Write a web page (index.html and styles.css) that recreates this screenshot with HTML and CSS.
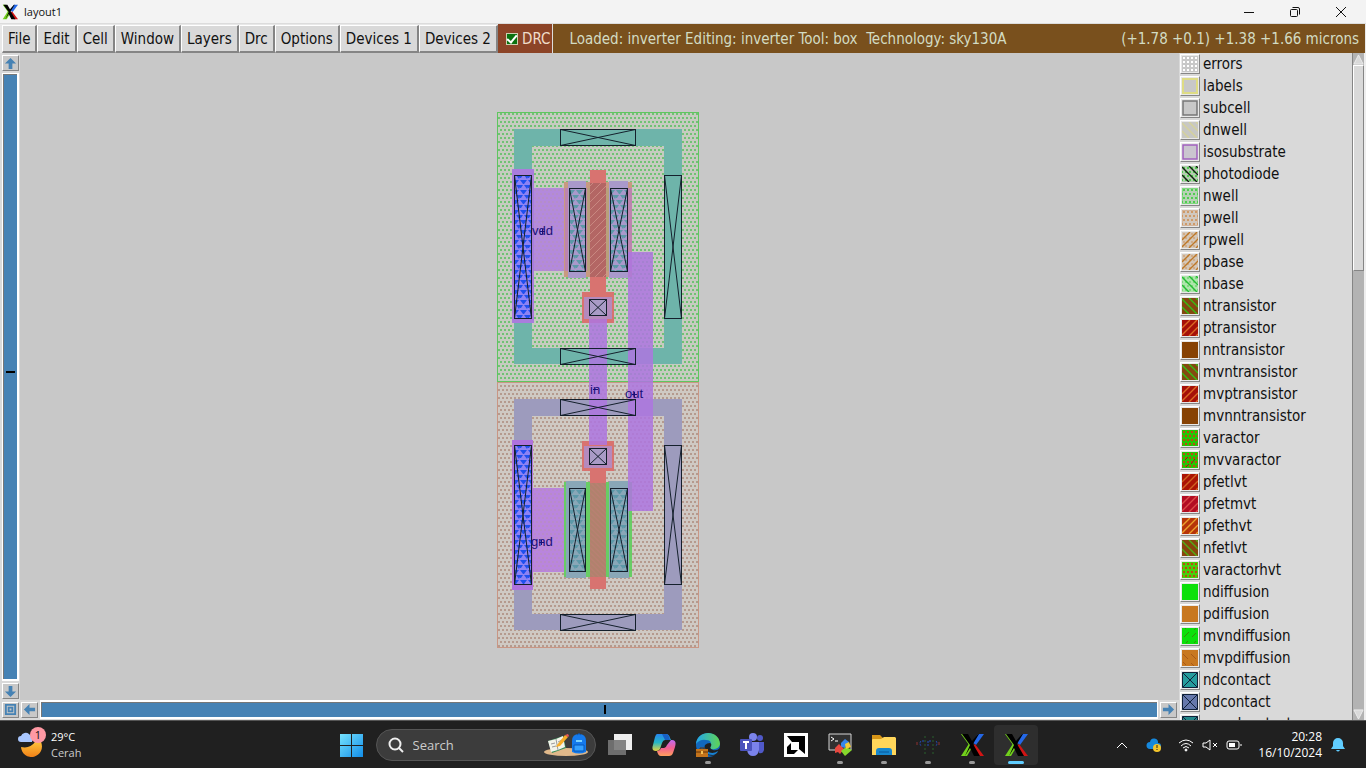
FILE: index.html
```
<!DOCTYPE html>
<html lang="en">
<head>
<meta charset="utf-8">
<title>layout1</title>
<link rel="stylesheet" href="styles.css">
</head>
<body>
<svg class="defs" aria-hidden="true">
  <defs>
    <pattern id="dots-green" width="4" height="8" patternUnits="userSpaceOnUse"><path d="M0 1h2v2H0zM2 5h2v2H2z" fill="#70c274"/></pattern>
    <pattern id="dots-brown" width="4" height="8" patternUnits="userSpaceOnUse"><path d="M0 1h2v2H0zM2 5h2v2H2z" fill="#b59a8e"/></pattern>
    <pattern id="tri-blue" width="8" height="10" patternUnits="userSpaceOnUse"><path d="M0 0h7L4 4H3zM4 5h4v2L7 9zM0 5h3L1 8 0 8z" fill="#1f50ee"/></pattern>
    <pattern id="tri-teal" width="8" height="10" patternUnits="userSpaceOnUse"><path d="M0 0h7L4 4H3zM4 5h4v2L7 9zM0 5h3L1 8 0 8z" fill="#5c98a8"/></pattern>
    <pattern id="hatch-up" width="8" height="8" patternUnits="userSpaceOnUse"><path d="M-1 9L9-1M-1 1L1-1M7 9L9 7" stroke="#d59a90"/></pattern>
    <pattern id="hatch-down" width="5" height="5" patternUnits="userSpaceOnUse"><path d="M-1-1L6 6M-1 4L1 6M4-1L6 1" stroke="#a98468" stroke-width="2"/></pattern>
    <pattern id="s-white" width="4" height="4" patternUnits="userSpaceOnUse"><path d="M1 1h2v2H1z" fill="#fff"/></pattern>
    <pattern id="s-green" width="4" height="8" patternUnits="userSpaceOnUse"><path d="M1 1h2v2H1zM3 5h1v2H3zM0 5h1v2H0z" fill="#50cd50"/></pattern>
    <pattern id="s-brown" width="4" height="8" patternUnits="userSpaceOnUse"><path d="M1 1h2v2H1zM3 5h1v2H3zM0 5h1v2H0z" fill="#cf9a68"/></pattern>
    <pattern id="s-red" width="4" height="8" patternUnits="userSpaceOnUse"><path d="M1 1h2v2H1zM3 5h1v2H3zM0 5h1v2H0z" fill="#bd4a10"/></pattern>
    <symbol id="down" viewBox="0 0 16 16"><path d="M0 9L7 16M0 1L15 16M7 0L16 9M14 0L16 2" stroke="currentColor" stroke-width="1.400" fill="none"/></symbol>
    <symbol id="up" viewBox="0 0 16 16"><path d="M0 8L8 0M0 15L15 0M7 16L16 7M14 16L16 14" stroke="currentColor" stroke-width="1.400" fill="none"/></symbol>
    <symbol id="cross" viewBox="0 0 16 16"><path d="M.500 .500h15v15H.500zM1 1L15 15M15 1L1 15" stroke="#102038" fill="none"/></symbol>
    <symbol id="xlogo" viewBox="0 0 24 24">
      <path d="M18 1h6L16 12l-4-3z" fill="#2468e8"/>
      <path d="M12 14l3-3 9 12h-6z" fill="#d21414"/>
      <path d="M1 23h6L13 13 10 9z" fill="#72d11c"/>
      <path d="M1 1h5l5 7-2 4z" fill="#72d11c"/>
      <path d="M2 1h6l4 7 6-7h1l-6 10 7 12h-6l-4-8-5 8H5l5-11z" fill="#000"/>
    </symbol>
  </defs>
</svg>

<header class="titlebar">
  <svg class="app-icon"><use href="#xlogo"/></svg>
  <h1>layout1</h1>
  <div class="window-buttons">
    <button aria-label="Minimize"><svg viewBox="0 0 12 12"><path d="M1 6.500h10"/></svg></button>
    <button aria-label="Restore"><svg viewBox="0 0 12 12"><rect x="1.500" y="3.500" width="7" height="7" rx="1"/><path d="M3.500 1.500H9q1.500 0 1.500 1.500v5.500"/></svg></button>
    <button aria-label="Close"><svg viewBox="0 0 12 12"><path d="M1 1l10 10M11 1L1 11"/></svg></button>
  </div>
</header>

<div class="menubar">
  <nav class="menus">
    <button>File</button><button>Edit</button><button>Cell</button><button>Window</button><button>Layers</button><button>Drc</button><button>Options</button><button>Devices 1</button><button>Devices 2</button>
  </nav>
  <label class="drc"><input type="checkbox" checked>DRC</label>
  <div class="status"><span>Loaded: inverter Editing: inverter Tool: box&nbsp; Technology: sky130A</span><span>(+1.78 +0.1) +1.38 +1.66 microns</span></div>
</div>

<main class="workspace">
  <section class="editor">
    <div class="vscroll">
      <button class="arrow" aria-label="Scroll up"><svg viewBox="0 0 14 14"><path d="M7 1l6 6H9v6H5V7H1z"/></svg></button>
      <div class="track"><span class="mark"></span></div>
      <button class="arrow" aria-label="Scroll down"><svg viewBox="0 0 14 14"><path d="M7 13L1 7h4V1h4v6h4z"/></svg></button>
    </div>
    <svg class="canvas" viewBox="20 53 1159 647" role="img" aria-label="Inverter cell layout">
      <rect x="497.500" y="112.500" width="201" height="269" fill="#c6cbc0"/>
      <rect x="497.500" y="112.500" width="201" height="269" fill="url(#dots-green)" stroke="#5fc65f"/>
      <rect x="497.500" y="382.500" width="201" height="265" fill="#cfc9c3"/>
      <rect x="497.500" y="382.500" width="201" height="265" fill="url(#dots-brown)" stroke="#c99684"/>

      <path d="M514 129h168v235H514zM532 146v202h132V146z" fill="#6eb4aa" fill-rule="evenodd"/>
      <path d="M514 399h168v231H514zM532 416v198h132V416z" fill="#9d9bbd" fill-rule="evenodd"/>

      <rect x="533" y="188" width="36" height="83" fill="#b389dc"/><rect x="533" y="188" width="36" height="83" fill="url(#dots-brown)" opacity=".25"/>
      <rect x="533" y="488" width="36" height="84" fill="#b985dd"/><rect x="533" y="488" width="36" height="84" fill="url(#dots-brown)" opacity=".25"/>

      <rect x="564" y="182" width="68" height="95" fill="#c89a80"/>
      <rect x="565" y="188" width="67" height="83" fill="#bd83af"/>
      <path d="M568 181h18v97h-18zM609 181h19v97h-19z" fill="#a999cb"/>
      <rect x="564" y="482" width="68" height="95" fill="#68cd65"/>
      <path d="M566 481h20v97h-20zM609 481h20v97h-20z" fill="#89a7b7"/>

      <path d="M590 170h16v123h-16zM582 292h32v31h-32zM582 441h32v30h-32zM590 470h16v119h-16z" fill="#d87370"/>
      <rect x="590" y="183" width="16" height="94" fill="#b36664"/><rect x="590" y="183" width="16" height="94" fill="url(#hatch-up)" opacity=".65"/>
      <rect x="587" y="188" width="3" height="83" fill="#b8a07b"/><rect x="606" y="188" width="3" height="83" fill="#b8a07b"/>
      <rect x="590" y="483" width="16" height="94" fill="#b88072"/><rect x="590" y="483" width="16" height="94" fill="url(#hatch-down)" opacity=".55"/>

      <rect x="628" y="252" width="25" height="259" fill="#ae76df" fill-opacity=".86"/>
      <rect x="589" y="319" width="18" height="126" fill="#ae76df" fill-opacity=".86"/>
      <path d="M584 297h28v22h-28zM584 446h28v22h-28z" fill="#b58abd"/>

      <rect x="512" y="169" width="22" height="154" fill="#a97ddd"/>
      <rect x="512" y="440" width="21" height="150" fill="#ae73dd"/>
      <g stroke="#14202c">
        <g fill="#8d82f4"><rect x="514.500" y="175.500" width="17" height="143"/><rect x="514.500" y="445.500" width="17" height="139"/></g>
        <g fill="url(#tri-blue)"><rect x="514.500" y="175.500" width="17" height="143"/><rect x="514.500" y="445.500" width="17" height="139"/></g>
        <g fill="url(#tri-teal)"><rect x="569.500" y="188.500" width="16" height="83"/><rect x="610.500" y="188.500" width="17" height="83"/><rect x="569.500" y="488.500" width="16" height="83"/><rect x="610.500" y="488.500" width="17" height="83"/></g>
        <g fill="#a99bc6"><rect x="589.500" y="299.500" width="17" height="16"/><rect x="589.500" y="448.500" width="17" height="16"/></g>
        <g fill="none"><rect x="560.500" y="129.500" width="75" height="16"/><rect x="560.500" y="348.500" width="75" height="16"/><rect x="664.500" y="175.500" width="17" height="143"/>
        <rect x="560.500" y="399.500" width="75" height="16"/><rect x="560.500" y="614.500" width="75" height="16"/><rect x="664.500" y="445.500" width="17" height="139"/></g>
        <path fill="none" d="M514.500 175.500l17 143m0-143l-17 143M514.500 445.500l17 139m0-139l-17 139M569.500 188.500l16 83m0-83l-16 83M610.500 188.500l17 83m0-83l-17 83M569.500 488.500l16 83m0-83l-16 83M610.500 488.500l17 83m0-83l-17 83M589.500 299.500l17 16m0-16l-17 16M589.500 448.500l17 16m0-16l-17 16M560.500 129.500l75 16m0-16l-75 16M560.500 348.500l75 16m0-16l-75 16M664.500 175.500l17 143m0-143l-17 143M560.500 399.500l75 16m0-16l-75 16M560.500 614.500l75 16m0-16l-75 16M664.500 445.500l17 139m0-139l-17 139"/>
      </g>
      <g class="net-labels"><text x="532" y="235">vdd</text><text x="590" y="394">in</text><text x="625" y="398">out</text><text x="531" y="546">gnd</text></g>
      <path d="M540 231.500h5M542.500 229v5M593 389.500h5M632 394.500h5M634.500 392v5M539 542.500h5M541.500 540v5" stroke="#191078" fill="none"/>
    </svg>
    <div class="hscroll">
      <button class="arrow" aria-label="Zoom to view"><svg viewBox="0 0 14 14"><path d="M1 1h12v12H1zM3 3v8h8V3zM4 4h6v6H4zM6 6v2h2V6z" fill-rule="evenodd"/></svg></button>
      <button class="arrow" aria-label="Scroll left"><svg viewBox="0 0 14 14"><path d="M1 7l6-6v4h6v4H7v4z"/></svg></button>
      <div class="track"><span class="mark"></span></div>
      <button class="arrow" aria-label="Scroll right"><svg viewBox="0 0 14 14"><path d="M13 7L7 1v4H1v4h6v4z"/></svg></button>
    </div>
  </section>

  <aside class="palette">
    <ul class="layers">
      <li><button><svg viewBox="0 0 16 16"><rect width="16" height="16" fill="#c8c8c8"/><rect width="16" height="16" fill="url(#s-white)"/></svg>errors</button></li>
      <li><button><svg viewBox="0 0 16 16"><rect x="1" y="1" width="14" height="14" fill="#c8c8c8" stroke="#dedc84" stroke-width="2"/></svg>labels</button></li>
      <li><button><svg viewBox="0 0 16 16"><rect x="1" y="1" width="14" height="14" fill="#c8c8c8" stroke="#777" stroke-width="1.500"/></svg>subcell</button></li>
      <li><button><svg viewBox="0 0 16 16" color="#d5d29b"><rect width="16" height="16" fill="#c8c8c3"/><use href="#down"/></svg>dnwell</button></li>
      <li><button><svg viewBox="0 0 16 16"><rect x="1" y="1" width="14" height="14" fill="#cac5cf" stroke="#a060bd" stroke-width="1.500"/></svg>isosubstrate</button></li>
      <li><button><svg viewBox="0 0 16 16" color="#102010"><rect width="16" height="16" fill="#b4ccb0"/><rect width="16" height="16" fill="url(#s-green)"/><use href="#down"/></svg>photodiode</button></li>
      <li><button><svg viewBox="0 0 16 16"><rect x=".500" y=".500" width="15" height="15" fill="#b7d1b5" stroke="#82d882"/><rect width="16" height="16" fill="url(#s-green)"/></svg>nwell</button></li>
      <li><button><svg viewBox="0 0 16 16"><rect x=".500" y=".500" width="15" height="15" fill="#d1c8bf" stroke="#d2b49b"/><rect width="16" height="16" fill="url(#s-brown)"/></svg>pwell</button></li>
      <li><button><svg viewBox="0 0 16 16" color="#bd7828"><rect width="16" height="16" fill="#d3c7b9"/><rect width="16" height="16" fill="url(#s-brown)" opacity=".6"/><use href="#up"/></svg>rpwell</button></li>
      <li><button><svg viewBox="0 0 16 16" color="#bd7828"><rect width="16" height="16" fill="#d3c7b9"/><rect width="16" height="16" fill="url(#s-brown)" opacity=".6"/><use href="#up"/></svg>pbase</button></li>
      <li><button><svg viewBox="0 0 16 16" color="#24bc34"><rect width="16" height="16" fill="#aee5ac"/><rect width="16" height="16" fill="url(#s-green)" opacity=".5"/><use href="#down"/></svg>nbase</button></li>
      <li><button><svg viewBox="0 0 16 16" color="#35bd14"><rect width="16" height="16" fill="#844910"/><use href="#down"/></svg>ntransistor</button></li>
      <li><button><svg viewBox="0 0 16 16" color="#db6a24"><rect width="16" height="16" fill="#a51008"/><use href="#up"/></svg>ptransistor</button></li>
      <li><button><svg viewBox="0 0 16 16"><rect width="16" height="16" fill="#874204"/></svg>nntransistor</button></li>
      <li><button><svg viewBox="0 0 16 16" color="#35bd14"><rect width="16" height="16" fill="#844910"/><use href="#down"/></svg>mvntransistor</button></li>
      <li><button><svg viewBox="0 0 16 16" color="#db6a24"><rect width="16" height="16" fill="#a51008"/><use href="#up"/></svg>mvptransistor</button></li>
      <li><button><svg viewBox="0 0 16 16"><rect width="16" height="16" fill="#874204"/></svg>mvnntransistor</button></li>
      <li><button><svg viewBox="0 0 16 16"><rect width="16" height="16" fill="#25c604"/><rect width="16" height="16" fill="url(#s-red)"/></svg>varactor</button></li>
      <li><button><svg viewBox="0 0 16 16"><rect width="16" height="16" fill="#25c604"/><rect width="16" height="16" fill="url(#s-red)"/><path d="M3 8l3-3M9 12l4-5M4 15l3-3" stroke="#704010"/></svg>mvvaractor</button></li>
      <li><button><svg viewBox="0 0 16 16" color="#d06321"><rect width="16" height="16" fill="#ab1404"/><use href="#up"/></svg>pfetlvt</button></li>
      <li><button><svg viewBox="0 0 16 16" color="#db4b48"><rect width="16" height="16" fill="#b30c22"/><use href="#up"/></svg>pfetmvt</button></li>
      <li><button><svg viewBox="0 0 16 16" color="#eca02c"><rect width="16" height="16" fill="#b63409"/><use href="#up"/></svg>pfethvt</button></li>
      <li><button><svg viewBox="0 0 16 16" color="#4fae16"><rect width="16" height="16" fill="#89450c"/><use href="#down"/></svg>nfetlvt</button></li>
      <li><button><svg viewBox="0 0 16 16"><rect width="16" height="16" fill="#48ce0b"/><rect width="16" height="16" fill="url(#s-red)"/></svg>varactorhvt</button></li>
      <li><button><svg viewBox="0 0 16 16"><rect width="16" height="16" fill="#0ce00a"/></svg>ndiffusion</button></li>
      <li><button><svg viewBox="0 0 16 16"><rect width="16" height="16" fill="#c87820"/></svg>pdiffusion</button></li>
      <li><button><svg viewBox="0 0 16 16"><rect width="16" height="16" fill="#0ce00a"/><path d="M2 9l5-5M10 9l4-4M3 1l1-1M12 2l2-2M4 15l2-2M12 15l2-2" stroke="#398b0b"/></svg>mvndiffusion</button></li>
      <li><button><svg viewBox="0 0 16 16"><rect width="16" height="16" fill="#c87820"/><path d="M1 4l5 5M9 4l5 5M1 12l3 3M9 13l3 3" stroke="#a85918"/></svg>mvpdiffusion</button></li>
      <li><button><svg viewBox="0 0 16 16"><rect width="16" height="16" fill="#259c9d"/><use href="#cross"/></svg>ndcontact</button></li>
      <li><button><svg viewBox="0 0 16 16"><rect width="16" height="16" fill="#6678ab"/><use href="#cross"/></svg>pdcontact</button></li>
      <li><button><svg viewBox="0 0 16 16"><rect width="16" height="16" fill="#24888a"/><use href="#cross"/></svg>mvndcontact</button></li>
    </ul>
    <div class="palette-scroll">
      <button aria-label="Scroll layers up"><svg viewBox="0 0 12 12"><path d="M6 1l5 10H1z"/></svg></button>
      <div class="trough"><div class="thumb"></div></div>
      <button aria-label="Scroll layers down"><svg viewBox="0 0 12 12"><path d="M1 1h10L6 11z"/></svg></button>
    </div>
  </aside>
</main>

<footer class="taskbar">
  <button class="weather">
    <svg viewBox="0 0 28 30"><defs><linearGradient id="moon" x2="0" y2="1"><stop stop-color="#ffc23a"/><stop offset="1" stop-color="#f08118"/></linearGradient></defs>
      <path d="M23 15a10.500 10.500 0 1 1-20 5q9 2 14-5z" fill="url(#moon)"/>
      <path d="M3 15a3 3 0 0 1 0-6 5 5 0 0 1 8-2q4 3 3 8z" fill="#a9c7ff"/>
      <circle cx="20" cy="8" r="8" fill="#ff99a4"/><text x="20" y="12" text-anchor="middle" class="badge">1</text></svg>
    <span>29°C<small>Cerah</small></span>
  </button>
  <div class="apps">
    <button class="app" aria-label="Start"><svg viewBox="0 0 24 24"><defs><linearGradient id="win" x2="1" y2="1"><stop stop-color="#76e3ff"/><stop offset="1" stop-color="#128de8"/></linearGradient></defs><path d="M1 1h11v11H1zM13 1h11v11H13zM1 13h11v11H1zM13 13h11v11H13z" fill="url(#win)"/></svg></button>
    <label class="search">
      <svg viewBox="0 0 16 16"><circle cx="7" cy="7" r="5.500"/><path d="M11 11l4 4"/></svg>
      <input type="text" placeholder="Search" aria-label="Search">
      <svg class="promo" viewBox="0 0 46 26"><ellipse cx="23" cy="20" rx="22" ry="4" fill="#e0b88a"/><path d="M5 9l15-5 3 12-14 5z" fill="#398c59"/><path d="M5 9l8-2 2 11-7 2zM13 7l7-3 2 11-7 3z" fill="#f3f4ea"/><path d="M8 12l4-1M9 15l4-1M15 10l4-2M13 7l2 11" stroke="#9a9a9a"/><path d="M14 13l8-10 3 2-8 9-4 1z" fill="#f8ae28"/><path d="M22 3l3-1 1 2-1 1z" fill="#ed5757"/><path d="M29 20V9q0-7 7-7t7 7v11q-7 3-14 0z" fill="#157aec"/><path d="M34 3q2-3 4 0" fill="none" stroke="#0758bb"/><path d="M31 13h10v6H31z" fill="#35a1ff" stroke="#0758bb"/><path d="M33 9h6" stroke="#7ad2ff" stroke-width="2"/></svg>
    </label>
    <button class="app" aria-label="Task view"><svg viewBox="0 0 24 24"><path d="M6 1h18v16H6z" fill="#eee"/><path d="M0 7h18v15H0z" fill="#777" fill-opacity=".9"/></svg></button>
    <button class="app" aria-label="Copilot"><svg viewBox="0 0 24 24"><defs><linearGradient id="cp1" x2="0" y2="1"><stop stop-color="#2786ee"/><stop offset=".5" stop-color="#26b6c5"/><stop offset="1" stop-color="#e8d43e"/></linearGradient><linearGradient id="cp2" x2="0" y2="1"><stop stop-color="#c16af1"/><stop offset=".5" stop-color="#f25f91"/><stop offset="1" stop-color="#ffa05b"/></linearGradient></defs><path d="M5 1h9q3 0 4 4l1 2h-6q-2 0-3 3l-2 6q-1 2-4 2-5 0-3-6L3 4q1-3 2-3z" fill="url(#cp1)"/><path d="M19 7h1q5 0 3 7l-2 6q-1 3-4 3H9q-3 0-4-5 3 0 4-3h3q2 0 3-3z" fill="url(#cp2)"/><path d="M10 1h4q3 0 4 6h-5z" fill="#1760c5"/><path d="M11 10l3-1-2 6H9z" fill="#202020"/></svg></button>
    <button class="app running" aria-label="Edge"><svg viewBox="0 0 24 24"><defs><linearGradient id="edge"><stop stop-color="#22a6ee"/><stop offset="1" stop-color="#60d552"/></linearGradient></defs><circle cx="12" cy="12" r="12" fill="#1268bd"/><path d="M0 11C1-3 23-4 24 11q-1 6-9 5-2-1 0-3 1-6-5-6Q4 6 0 11z" fill="url(#edge)"/><path d="M15 13q-2 3 2 4 4 1 7-2-2 10-12 7-5-4-3-10 2-2 5-2 2 1 1 3z" fill="#202020"/><path d="M9 13q-2 9 8 9 4-1 5-4-6 4-11 0-3-3-2-5z" fill="#1782d5"/><path d="M0 16h12v8H0z" fill="#c3731b"/><path d="M0 19h12M4 16v-1h4v1" stroke="#633207" fill="none"/><path d="M5 18h2v3H5z" fill="#f5c255"/></svg></button>
    <button class="app" aria-label="Teams"><svg viewBox="0 0 24 24"><circle cx="20" cy="5" r="3" fill="#5059c9"/><circle cx="13" cy="4" r="4" fill="#7b83eb"/><path d="M17 9h7v8q-1 4-5 3z" fill="#5059c9"/><path d="M7 9h12v8q-1 6-6 6t-6-6z" fill="#7b83eb"/><rect y="6" width="12" height="12" rx="1" fill="#4b53bc"/><path d="M3 9h6M6 9v7" stroke="#fff" stroke-width="2"/></svg></button>
    <button class="app" aria-label="AMD Software"><svg viewBox="0 0 24 24"><path d="M0 0h24v24H0z" fill="#fff"/><path d="M3 3h18v18l-6-5V9H8zM7 10v7h7l-4 4H3v-7z"/></svg></button>
    <button class="app running" aria-label="Terminal"><svg viewBox="0 0 24 24"><path d="M1 1h22v16H1z" fill="#303030" stroke="#d5d5d5"/><path d="M3 4l3 2-3 2M7 8h3" stroke="#fff" fill="none"/><path d="M13 10l4-4 4 3-4 6-4-1z" fill="#3685eb"/><path d="M7 15l4-4 5 5-4 5-2-2-3 1z" fill="#e84840"/><path d="M13 18l5-4 6 3-7 6z" fill="#86d72c"/><path d="M17 11l4-2 2 5-5 2z" fill="#f4cb36"/></svg></button>
    <button class="app running" aria-label="File Explorer"><svg viewBox="0 0 24 24"><path d="M0 2h8l3 3h12v8H0z" fill="#d79517"/><path d="M0 7q0-1 1-1h8l3-2h11l1 1v17H0z" fill="#ffd65a"/><path d="M4 22v-4q0-3 3-3h10q3 0 3 3v4z" fill="#1687ce"/><path d="M7 19h10" stroke="#07569a"/></svg></button>
    <button class="app running" aria-label="Waveform"><svg viewBox="0 0 24 24"><path d="M9 3v19M17 3v19" stroke="#28602d" stroke-dasharray="2 2"/><path d="M1 9v3M23 9v3" stroke="#8f3030"/><path d="M5 8q-2 2 0 5M7 7v2M12 8v6M14 7v2M20 8q2 2 0 5" stroke="#234dbb" stroke-dasharray="2 1" fill="none"/></svg></button>
    <button class="app running" aria-label="Xming"><svg viewBox="0 0 24 24"><use href="#xlogo"/></svg></button>
    <button class="app running active" aria-label="layout1"><svg viewBox="0 0 24 24"><use href="#xlogo"/></svg></button>
  </div>
  <div class="tray">
    <svg viewBox="0 0 16 16"><path d="M3 11l5-5 5 5"/></svg>
    <svg viewBox="0 0 16 16"><path d="M4 12a3 3 0 0 1 0-7 4 4 0 0 1 8 1 3 3 0 0 1 0 6z" fill="#1688dc" stroke="none"/><circle cx="11" cy="11" r="4" fill="#f4c52b" stroke="none"/><path d="M11 8v3M11 12v1" stroke="#222"/></svg>
    <svg class="wifi" viewBox="0 0 16 16"><path d="M1 6q7-6 14 0M3 9q5-5 10 0M5 11q3-3 6 0"/><circle cx="8" cy="13" r="1" fill="#fff"/></svg>
    <svg viewBox="0 0 16 16"><path d="M1 6h3l4-3v10l-4-3H1zM11 6l4 4M15 6l-4 4"/></svg>
    <svg viewBox="0 0 16 16"><rect x="1" y="4" width="12" height="8" rx="2"/><path d="M3 6h6v4H3z" fill="#fff" stroke="none"/><path d="M15 7v2"/></svg>
    <time datetime="2024-10-16T20:28">20:28<br>16/10/2024</time>
    <svg class="bell" viewBox="0 0 16 16"><path d="M1 12l2-3V6a5 5 0 0 1 10 0v3l2 3zM6 13h4q-2 3-4 0z" fill="#60cdff" stroke="none"/></svg>
  </div>
</footer>
</body>
</html>
```
FILE: styles.css
```
* { box-sizing: border-box; }
body { margin: 0; height: 100vh; overflow: hidden; display: flex; flex-direction: column; background: #d9d9d9; font: 15px/18px "DejaVu Sans Condensed", "DejaVu Sans", sans-serif; color: #111; }
button { font: inherit; color: inherit; border: 0; padding: 0; margin: 0; background: none; }
svg { display: block; flex: none; }
.defs { position: absolute; width: 0; height: 0; }

.titlebar { height: 24px; flex: none; display: flex; align-items: center; padding-left: 2px; background: #f3f3f3; border-bottom: 1px solid #dcdcdc; }
.app-icon { width: 16px; height: 16px; }
.titlebar h1 { margin: 0 0 0 6px; flex: 1; font: 11px/16px "Open Sans", sans-serif; }
.window-buttons { display: flex; padding-right: 2px; }
.window-buttons button { width: 46px; height: 22px; display: grid; place-items: center; }
.window-buttons svg { width: 12px; height: 12px; fill: none; stroke: #111; }

.menubar { height: 29px; flex: none; display: flex; padding: 0 1px 0 2px; background: #e8e8e8; }
.menus { display: flex; flex: 0 0 496px; }
.menus button { flex: 1 1 auto; background: #d9d9d9; border: 1px solid #fff; border-right: 2px solid #858585; border-bottom: 2px solid #858585; margin-top: 1px; }
.drc { display: flex; align-items: center; gap: 4px; padding: 0 2px 0 8px; background: #8c4427; color: #f0dccb; border-right: 1px solid #ddd; }
.drc input { appearance: none; width: 12px; height: 12px; margin: 0; border: 1px solid #c9cfae; background: #0a7210; display: grid; place-items: center; }
.drc input:checked::after { content: ""; width: 4px; height: 8px; border: solid #fff; border-width: 0 2px 2px 0; transform: rotate(40deg); margin-top: -2px; }
.status { flex: 1; display: flex; justify-content: space-between; align-items: center; padding: 0 6px 0 16px; background: #79501d; color: #d3dcc3; white-space: nowrap; }

.workspace { flex: 1; min-height: 0; display: flex; }
.editor { flex: 1; min-width: 0; display: grid; grid-template: minmax(0, 1fr) 20px / 20px minmax(0, 1fr); background: #c8c8c8; }
.canvas { width: 100%; height: 100%; background: #c8c8c8; }
.net-labels { font: 13px "Liberation Sans", sans-serif; fill: #191078; }
.vscroll, .hscroll { display: flex; align-items: center; gap: 2px; background: #d9d9d9; }
.vscroll { flex-direction: column; padding: 2px 0 1px 1px; }
.hscroll { grid-column: 1 / -1; padding: 0 2px 1px 2px; }
.arrow { flex: none; width: 17px; height: 16px; display: grid; place-items: center; background: #c8c8c8; border: 1px solid #fff; border-right-color: #858585; border-bottom-color: #858585; }
.arrow svg { width: 13px; height: 13px; fill: #4682b4; }
.track { flex: 1; display: grid; place-items: center; background: #4682b4; border: 1px solid #fff; box-shadow: inset 1px 1px #777; }
.vscroll .track { width: 17px; border-width: 1px 2px 2px 1px; }
.hscroll .track { height: 19px; border-width: 2px 1px 2px 1px; }
.vscroll .mark { width: 9px; height: 2px; margin-bottom: 10px; background: #000; }
.hscroll .mark { width: 2px; height: 9px; margin-left: 12px; background: #000; }

.palette { width: 187px; flex: none; display: flex; background: #d9d9d9; overflow: hidden; }
.layers { flex: 1; margin: 0; padding: 0; list-style: none; overflow: hidden; }
.layers button { display: flex; align-items: center; gap: 3px; width: 100%; height: 22px; padding-left: 1px; text-align: left; line-height: 20px; }
.layers svg { width: 20px; height: 20px; padding: 1px; border: 1px solid #fff; border-right-color: #858585; border-bottom-color: #858585; background: #e8e8e8; }
.palette-scroll { width: 14px; flex: none; display: flex; flex-direction: column; border-left: 1px solid #858585; border-right: 2px solid #eee; background: #b3b3b3; }
.palette-scroll button { height: 12px; }
.palette-scroll svg { width: 11px; height: 11px; fill: #d9d9d9; stroke: #eee; }
.trough { flex: 1; }
.thumb { height: 32%; background: #d9d9d9; border: 1px solid #fff; border-right-color: #858585; border-bottom-color: #858585; }

.taskbar { height: 48px; flex: none; display: grid; grid-template-columns: 1fr auto 1fr; align-items: center; background: #202020; border-top: 1px solid #555; color: #fff; font: 11px/16px "Open Sans", sans-serif; }
.weather { display: flex; align-items: center; gap: 5px; padding-left: 18px; text-align: left; }
.weather svg { width: 28px; height: 30px; margin-top: -6px; }
.badge { font: 11px "Open Sans", sans-serif; fill: #111; }
.weather small { display: block; font-size: 11px; color: #ccc; }
.apps { display: flex; align-items: center; }
.app { position: relative; width: 44px; height: 40px; display: grid; place-items: center; border-radius: 4px; }
.app svg { width: 24px; height: 24px; }
.search { display: flex; align-items: center; gap: 9px; width: 220px; height: 32px; margin: 0 2px 0 3px; padding: 0 6px 0 11px; border: 1px solid #555; border-radius: 16px; background: #3c3c3c; }
.search svg { width: 16px; height: 16px; fill: none; stroke: #eee; stroke-width: 2px; }
.search .promo { width: 46px; height: 26px; stroke: none; stroke-width: 1px; }
.search input { flex: 1; min-width: 0; padding: 0; border: 0; background: none; color: #ddd; font: 13px/18px "Open Sans", sans-serif; }
.search input::placeholder { color: #ccc; opacity: 1; }
.running::after { content: ""; position: absolute; left: 50%; bottom: 1px; width: 6px; height: 3px; margin-left: -3px; border-radius: 2px; background: #999; }
.active { background: #2e2e2e; }
.active::after { width: 16px; margin-left: -8px; background: #60cdff; }
.tray { display: flex; align-items: center; justify-content: flex-end; gap: 8px; padding-right: 20px; }
.tray svg { width: 16px; height: 16px; fill: none; stroke: #fff; }
.tray svg:first-child, .tray svg:nth-child(2) { margin-right: 8px; }
.tray time { padding-left: 8px; text-align: right; font-size: 12px; }
```
